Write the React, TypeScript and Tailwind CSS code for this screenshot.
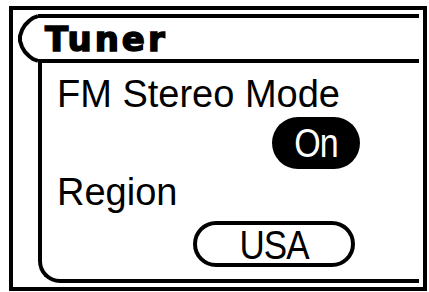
import React from "react";

const sans = { fontFamily: '"Liberation Sans", Arial, sans-serif' };

export default function App() {
  return (
    <div className="w-[429px] h-[292px] bg-white overflow-hidden">
      <div className="ml-[9px] mt-[6px] w-[418px] h-[285px] border-4 border-black pt-[4px] pl-[4px] pr-[4px] flex flex-col">
        <div className="flex h-[49px]">
          <svg width="21" height="49" viewBox="0 0 21 49" className="shrink-0">
            <polyline
              points="21,2 16,4 12,7 8,11 5,16 3,22 3,27 5,33 8,38 12,42 16,45 21,47"
              fill="none"
              stroke="black"
              strokeWidth="4"
            />
          </svg>
          <div className="flex-1 border-y-4 border-black flex items-center pl-[7px]">
            <span
              className="text-[34px] font-bold leading-none text-black tracking-[3px] [-webkit-text-stroke:1.5px_black]"
              style={{ fontFamily: '"DejaVu Sans", sans-serif' }}
            >
              Tuner
            </span>
          </div>
        </div>
        <div className="ml-[21px] h-[220px] border-l-4 border-b-4 border-black rounded-bl-[22px] flex flex-col pl-[15px] pt-[12px]">
          <div className="text-[38px] leading-none text-black" style={sans}>
            FM Stereo Mode
          </div>
          <div className="mt-[4px] ml-[215px] w-[88px] h-[52px] bg-black rounded-full flex items-center justify-center">
            <span className="text-[34px] leading-none text-white tracking-[-1px] scale-y-[1.2] inline-block" style={sans}>
              On
            </span>
          </div>
          <div className="mt-[4px] text-[38px] leading-none text-black" style={sans}>
            Region
          </div>
          <div className="mt-[10px] ml-[136px] w-[162px] h-[46px] border-4 border-black rounded-full flex items-center justify-center">
            <span className="text-[35px] leading-none text-black tracking-[-1px] scale-y-[1.15] inline-block" style={sans}>
              USA
            </span>
          </div>
        </div>
      </div>
    </div>
  );
}
